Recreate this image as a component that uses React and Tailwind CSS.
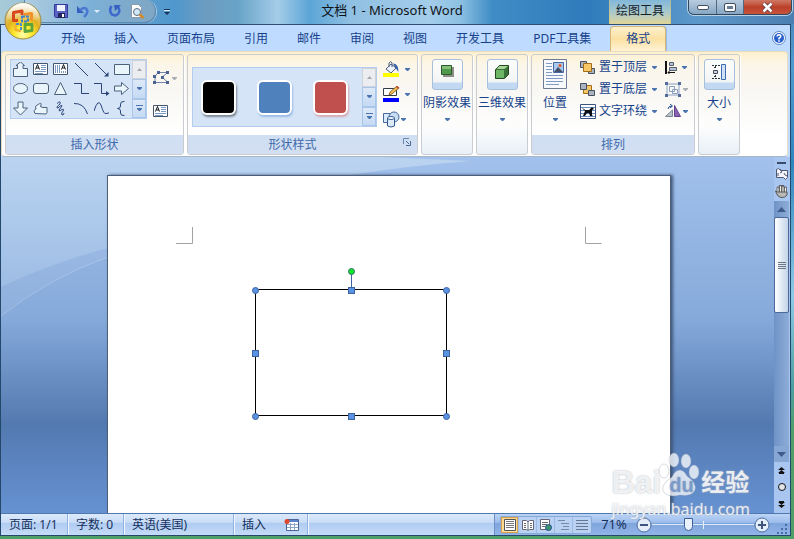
import React from 'react';

const tabs = ['开始', '插入', '页面布局', '引用', '邮件', '审阅', '视图', '开发工具', 'PDF工具集'];

function Svg({ w, h, children, className = '' }) {
  return (
    <svg width={w} height={h} viewBox={`0 0 ${w} ${h}`} className={`block shrink-0 ${className}`} fill="none" aria-hidden="true">
      {children}
    </svg>
  );
}

function Caret({ dim = false }) {
  return (
    <Svg w={5} h={3}>
      <path d="M0 0h5v1L3 3H2L0 1z" fill={dim ? '#a9adb3' : '#4a75b0'} />
    </Svg>
  );
}

function OfficeOrb() {
  return (
    <button aria-label="Office" className="absolute top-0.5 left-1 z-20 size-[38px]">
      <Svg w={38} h={38}>
        <defs>
          <radialGradient id="orb" cx="50%" cy="88%" r="88%">
            <stop offset="0" stopColor="#fffcae" />
            <stop offset="0.28" stopColor="#fdea2c" />
            <stop offset="0.55" stopColor="#e2b120" />
            <stop offset="0.8" stopColor="#e6c777" />
            <stop offset="1" stopColor="#fffbe8" />
          </radialGradient>
          <linearGradient id="gloss" x1="0" y1="0" x2="0" y2="1">
            <stop offset="0" stopColor="#fff" stopOpacity="0.9" />
            <stop offset="1" stopColor="#fff" stopOpacity="0.1" />
          </linearGradient>
        </defs>
        <circle cx="19" cy="19" r="18" fill="url(#orb)" stroke="#9b8a48" />
        <path d="M3 17A16 16 0 0 1 35 17Q19 21 3 17z" fill="url(#gloss)" />
        <g strokeLinejoin="round">
          <path d="M14 18.500H9.500V10.500L18 9V13" stroke="#d8481c" strokeWidth="3" />
          <path d="M20 12.500l7.500-1v7" stroke="#f0922a" strokeWidth="3" />
          <path d="M18 14.500h6v5h-6z" stroke="#3c7fce" strokeWidth="2" strokeDasharray="3 1" />
          <path d="M16 22h-4.500v6l5.500 1" stroke="#f3b431" strokeWidth="2.500" />
          <path d="M12 22h5v6" stroke="#4b8bd2" strokeWidth="2" strokeDasharray="3 1" />
          <path d="M21 22.500h7v6l-7 1z" stroke="#5ca43c" strokeWidth="2.800" />
        </g>
      </Svg>
    </button>
  );
}

function QuickAccess() {
  return (
    <div className="flex w-[175px] shrink-0 items-start">
      <div className="ml-6 flex h-[23px] w-[132px] items-center rounded-r-full border border-t-0 border-[#5f86ae] bg-linear-to-r from-[#b3cfe4]/80 via-[#7db0d8]/70 to-[#8fabc0]/70 pl-[29px] shadow-[1px_0_0_#a9cbe6]">
        <button aria-label="保存">
          <Svg w={14} h={14}>
            <path d="M0.500 0.500h13v13h-12l-1-1z" fill="#5a62c4" stroke="#34389a" />
            <path d="M3 1h8v6H3z" fill="#eef2fc" />
            <path d="M4 9h7v5H4z" fill="#23265c" />
            <path d="M8 10h2v3H8z" fill="#fff" />
          </Svg>
        </button>
        <button aria-label="撤消" className="ml-2 flex items-center gap-1">
          <Svg w={14} h={13}>
            <path d="M1 1v7h7z" fill="#3560be" />
            <path d="M4 5.500Q7 2 10 3.500Q13.500 7 8 12" stroke="#4a78d2" strokeWidth="2.500" />
          </Svg>
          <Svg w={6} h={3}><path d="M0 0h6L3 3z" fill="#dcecfa" /></Svg>
        </button>
        <button aria-label="恢复" className="ml-2">
          <Svg w={14} h={14}>
            <path d="M3.500 2Q0.500 7 4 10.500Q8.500 13 11 8.500Q12 5.500 10 3" stroke="#3c68cc" strokeWidth="2.500" />
            <path d="M6 1h7L7 7z" fill="#3560be" />
          </Svg>
        </button>
        <button aria-label="打印预览" className="ml-2">
          <Svg w={15} h={15}>
            <path d="M1.500 0.500h7l3 3v10h-10z" fill="#fff" stroke="#8a98ac" />
            <circle cx="7" cy="8" r="3.500" fill="#cfe9f7" stroke="#5c6b80" />
            <path d="M9.500 10.500l4 3.500" stroke="#d88a24" strokeWidth="2.500" />
          </Svg>
        </button>
      </div>
      <button aria-label="自定义快速访问工具栏" className="mt-[9px] ml-2">
        <Svg w={6} h={6}>
          <path d="M0 0h6v1H0z" fill="#17345c" /><path d="M0 3h6L3 6z" fill="#17345c" /><path d="M0 1h6v1H0z" fill="#d8ebfa" />
        </Svg>
      </button>
    </div>
  );
}

function TitleBar() {
  return (
    <header className="relative flex h-6 shrink-0 bg-[linear-gradient(90deg,#a8cbd8_0,#5f9fce_18%,#4f97cd_22%,#6d9cc0_26%,#68a4c8_30%,#a4cce8_35%,#5ca5d6_39%,#8fbfe2_44%,#a4cdea_54%,#8cc0e2_58%,#3f8cc6_62%,#2f7bbb_74%,#5d98ca_88%,#4b7fb2_100%)]">
      <QuickAccess />
      <h1 className="flex-1 text-center text-[13px] leading-[21px] text-[#101418]">文档 1 - Microsoft Word</h1>
      <div className="w-[62px] border-x border-[#d8bd62]/50 bg-linear-to-b from-[#82b7da] via-[#a9c9cb] to-[#e0d598] text-center text-[12px] leading-[22px] text-[#15202c]">绘图工具</div>
      <div className="flex w-[123px] justify-end pr-0.5">
        <div className="flex h-[15px] w-[104px] overflow-hidden rounded-b-md border border-t-0 border-[#33475c] shadow-[0_0_0_1px_#b8d2e8]">
          <button aria-label="最小化" className="flex w-7 items-center justify-center border-r border-[#4f6780] bg-linear-to-b from-[#b9ccdf] to-[#86a6c4]">
            <span className="h-[5px] w-3 rounded-xs border border-[#444f62] bg-white" />
          </button>
          <button aria-label="最大化" className="flex w-[27px] items-center justify-center border-r border-[#4f6780] bg-linear-to-b from-[#b9ccdf] to-[#86a6c4]">
            <span className="h-[9px] w-3 rounded-xs border border-[#444f62] bg-[#687d98] shadow-[inset_0_0_0_2px_#fff]" />
          </button>
          <button aria-label="关闭" className="flex flex-1 items-center justify-center bg-linear-to-b from-[#cf7866] via-[#bb4028] to-[#c8533a]">
            <Svg w={13} h={11}>
              <path d="M2.500 1.500l8 8M10.500 1.500l-8 8" stroke="#5a3a44" strokeWidth="4" />
              <path d="M2.500 1.500l8 8M10.500 1.500l-8 8" stroke="#fff" strokeWidth="2.500" />
            </Svg>
          </button>
        </div>
      </div>
    </header>
  );
}

function Tabs() {
  return (
    <nav className="flex h-[27px] shrink-0 border-t border-[#2f4e70] bg-[#bfdbff] pl-[46px] text-[12px] text-[#15428b]">
      {tabs.map((t) => (
        <button key={t} className="mr-px px-[14px] pt-px">{t}</button>
      ))}
      <button className="mt-px ml-1 w-14 rounded-t border border-b-0 border-[#d2b672] bg-linear-to-b from-[#fdf0cd] via-[#fbe0a2] to-[#fff2d4] shadow-[1px_0_0_#9dbbe2]">格式</button>
      <button aria-label="帮助" className="mr-1 ml-auto">
        <Svg w={14} h={14}>
          <circle cx="7" cy="7" r="6.500" fill="#fff" stroke="#5c85c4" />
          <circle cx="7" cy="7" r="5" fill="#2860cc" />
          <path d="M5 5.500Q5.200 3.800 7 3.800Q9 4 8.700 5.600Q8.500 6.500 7 7.200V8.500" stroke="#fff" strokeWidth="1.500" />
          <path d="M6.200 9.300h1.600v1.500H6.200z" fill="#fff" />
        </Svg>
      </button>
    </nav>
  );
}

function Group({ label, className = '', children, launcher = false }) {
  return (
    <section className={`flex shrink-0 flex-col overflow-hidden rounded-[3px] border border-[#c9cdd2] shadow-[1px_1px_0_#fff] ${label ? '' : 'bg-linear-to-b from-transparent from-70% to-[#e8f0f6]'} ${className}`}>
      <div className="flex flex-1 px-1 pt-1">{children}</div>
      {label && (
        <div className="flex h-[19px] items-start bg-linear-to-b from-[#d0dff3] to-[#d3def1] text-center text-[12px] leading-[19px] text-[#3e6aaa]">
          <span className="flex-1">{label}</span>
          {launcher && (
            <button aria-label="对话框" className="mt-[3px] flex w-5 pl-1.5">
              <Svg w={8} h={8}><path d="M0.500 6V0.500H6" stroke="#6a87b0" /><path d="M3 3l3 3M7.500 3v4.500H3" stroke="#4a6a98" /></Svg>
            </button>
          )}
        </div>
      )}
    </section>
  );
}

function GalleryScroll() {
  return (
    <div className="flex w-[14px] flex-col">
      <button aria-label="上一行" className="flex flex-1 items-center justify-center border border-[#cfd3d8] bg-[#ebedf0]"><Svg w={5} h={3}><path d="M0 3h5L2.500 0z" fill="#a8a8a8" /></Svg></button>
      <button aria-label="下一行" className="flex flex-1 items-center justify-center border border-[#a9c5ea] bg-linear-to-b from-[#dde9f8] to-[#c6daf4]"><Caret /></button>
      <button aria-label="其他" className="flex flex-1 flex-col items-center justify-center gap-0.5 border border-[#a9c5ea] bg-linear-to-b from-[#dde9f8] to-[#c6daf4]"><span className="h-px w-[7px] bg-[#4a75b0]" /><Caret /></button>
    </div>
  );
}

const ln = { stroke: '#2b4478', strokeWidth: 1 };
const sh = { stroke: '#4c6079', strokeWidth: 1, fill: '#eaf4fb' };

const textBoxIcon = (
  <>
    <path d="M0.500 1.500h14v11H0.500z" fill="#fff" stroke="#44566e" />
    <path d="M2.500 7.500l2-5 2 5M3.500 6h2.500" stroke="#10151c" />
    <path d="M8 3.500h5M8 5.500h5M8 7.500h5M2 9.500h11M2 11.500h8" stroke="#7b9ac6" />
  </>
);

const shapes = [
  ['上箭头标注', <path d="M0.500 6.500h4V3.500H3L7.500 0l4 3.500H10v3h4.500v8H0.500z" {...sh} />],
  ['文本框', textBoxIcon],
  ['竖排文本框', <><path d="M0.500 1.500h14v11H0.500z" fill="#fff" stroke="#44566e" /><path d="M2.500 3v8M4.500 3v8M6.500 3v8M8.500 9v2M10.500 9v2M12.500 9v2" stroke="#7b9ac6" /><path d="M8.500 7.500l2-5 2 5M9.500 6h2.500" stroke="#10151c" /></>],
  ['直线', <path d="M1 1l13 13" {...ln} />],
  ['箭头', <><path d="M1 1l12 12" {...ln} /><path d="M14.500 14.500H10l4.500-4.500z" fill="#2b4478" /></>],
  ['矩形', <path d="M0.500 2.500h15v10h-15z" {...sh} />],
  ['椭圆', <ellipse cx="7.500" cy="7.500" rx="7" ry="5" {...sh} />],
  ['圆角矩形', <rect x="0.500" y="2.500" width="15" height="10" rx="2.500" {...sh} />],
  ['三角形', <path d="M7.500 1.500l6 12h-12z" {...sh} />],
  ['肘形', <path d="M0 2.500h7.500v10H15" {...ln} />],
  ['肘形箭头', <><path d="M0 2.500h7.500v10H13" {...ln} /><path d="M15.500 12.500L12 10v5z" fill="#2b4478" /></>],
  ['右箭头', <path d="M0.500 5h7V1.500l7 6-7 6V10h-7z" {...sh} />],
  ['下箭头', <path d="M5 1h5v6h4.500l-7 7-7-7H5z" {...sh} />],
  ['任意多边形', <path d="M2 12.500Q0 9 3 8Q1 5 5 3.500Q9 1 8 4Q6 6 10 6.500H14v5l-1 1.500z" {...sh} />],
  ['自由曲线', <path d="M4 2.500Q8-1 7 3Q2 7 5 7Q9 3 9 5L6 9Q6 11 8 9Q12 7 10 10Q8 12 9 14Q11 14 11 12" {...ln} />],
  ['弧形', <path d="M0 2.500Q10 2 13.500 13" {...ln} />],
  ['曲线', <path d="M0 10Q4-3 7 4Q10 14 12 12.500L15 12" {...ln} />],
  ['左大括号', <path d="M10.500 0.500Q6.500 0 6.500 3V5Q6.500 7.500 3.500 7.500Q6.500 7.500 6.500 10V12Q6.500 15 10.500 14.500" {...ln} />],
];

function InsertShapes() {
  return (
    <Group label="插入形状" className="w-[179px]">
      <div className="flex h-[60px] w-[137px] shrink-0 border border-[#b2cdee] bg-[#d5e5f7]">
        <div className="grid flex-1 grid-cols-6 grid-rows-3">
          {shapes.map(([name, art]) => (
            <button key={name} aria-label={name} className="flex items-center justify-center"><Svg w={16} h={15}>{art}</Svg></button>
          ))}
        </div>
        <GalleryScroll />
      </div>
      <div className="flex flex-col gap-[19px] pt-3 pl-1.5">
        <button aria-label="编辑形状" className="flex items-center gap-0.5">
          <Svg w={17} h={14}>
            <path d="M2 11.500V5.500L5 1.500h10L9 6l6 5.500z" stroke="#7186ac" />
            <path d="M0 4h3v3H0zM4 0h3v3H4zM13 0h3v3h-3zM8 5h3v3H8zM0 10h3v3H0zM13 10h3v3h-3z" fill="#4a6392" />
          </Svg>
          <Caret dim />
        </button>
        <button aria-label="编辑文字"><Svg w={15} h={14}>{textBoxIcon}</Svg></button>
      </div>
    </Group>
  );
}

function ShapeStyles() {
  const swatches = [['黑色', 'bg-black shadow-[1px_2px_2px_#7d8795]'], ['蓝色', 'bg-[#4f81bd] shadow-[1px_2px_2px_#9bbbe6]'], ['红色', 'bg-[#c0504d] shadow-[1px_2px_2px_#d8a9b4]']];
  return (
    <Group label="形状样式" launcher className="w-[231px]">
      <div className="mt-2 flex h-[60px] w-[185px] shrink-0 border border-[#b2cdee] bg-[#d5e5f7]">
        <div className="flex flex-1 items-center gap-[21px] pl-2">
          {swatches.map(([name, c]) => (
            <button key={name} aria-label={name} className={`size-[35px] rounded-md border-2 border-white ${c}`} />
          ))}
        </div>
        <GalleryScroll />
      </div>
      <div className="flex flex-col gap-[9px] pt-0.5 pl-1.5">
        <button aria-label="形状填充" className="flex items-center gap-[5px]">
          <Svg w={17} h={16}>
            <path d="M3 8l5-5 5 4-5 5z" fill="#edf4fb" stroke="#4c5f7c" /><path d="M6 6V2q2-3 3 0v4" stroke="#4c5f7c" /><path d="M10 2.500q5.500 0 5.500 8.500l-3-4z" fill="#3460a8" />
            <path d="M0 12h16v4H0z" fill="#ff0" />
          </Svg>
          <Caret />
        </button>
        <button aria-label="形状轮廓" className="flex items-center gap-[5px]">
          <Svg w={17} h={16}>
            <path d="M0.500 2.500h13v7H0.500z" fill="#fff" stroke="#333b48" /><path d="M6 9l1-3 7-6 2 2-7 6z" fill="#f0bd56" stroke="#7c5020" strokeWidth="0.800" /><path d="M13 1l1.500-1L16.500 2 15 3z" fill="#c24b35" />
            <path d="M0 12h16v4H0z" fill="#00f" />
          </Svg>
          <Caret />
        </button>
        <button aria-label="更改形状" className="flex items-center gap-px">
          <Svg w={17} h={17}>
            <path d="M0.500 2.500h8v9h-8z" fill="#dbeafa" stroke="#47699c" /><circle cx="11" cy="6" r="5" fill="#c9def5" stroke="#47699c" />
            <path d="M4.500 7v8q3.500 2 7 0V7" fill="#dceafa" stroke="#355b92" /><ellipse cx="8" cy="7" rx="3.500" ry="1.500" fill="#fff" stroke="#355b92" />
          </Svg>
          <Caret />
        </button>
      </div>
    </Group>
  );
}

function BigButton({ label, children, framed = true }) {
  return (
    <button className="flex flex-1 flex-col items-center text-[12px] leading-[18px] whitespace-nowrap text-[#15428b]">
      <span className={framed ? 'flex h-[31px] w-[31px] items-start justify-center rounded-[3px] border border-[#a6bfdd] bg-[linear-gradient(#fdfdfb_0,#f3f5f5_22px,#c3d9f1_23px)] pt-1' : 'flex h-[31px] items-start'}>
        {children}
      </span>
      <span className="mt-1">{label}</span>
      <span className="mt-1.5"><Caret /></span>
    </button>
  );
}

function ArrangeRow({ label, icon }) {
  return (
    <button className="flex h-[22px] items-center gap-[3px] text-[12px] whitespace-nowrap text-[#15428b]">
      {icon}<span>{label}</span><span className="pl-0.5"><Caret /></span>
    </button>
  );
}

function Arrange() {
  const gray = { fill: '#aab3c0', stroke: '#475160' };
  const gold = { fill: '#f6c867', stroke: '#a36d18' };
  return (
    <Group label="排列" className="w-[164px]">
      <div className="flex w-[38px] shrink-0">
        <BigButton label="位置" framed={false}>
          <Svg w={24} h={30}>
            <path d="M0.500 0.500h23v29H0.500z" fill="#f7f9fd" stroke="#6c7c98" />
            <path d="M3 4.500h6M3 7.500h6M3 10.500h6M3 13.500h6M3 16.500h17M3 19.500h17M3 22.500h17M3 25.500h13" stroke="#7e9ac4" />
            <path d="M10.500 3.500h10v10h-10z" fill="#a9caf0" stroke="#4968a0" /><circle cx="17" cy="6.500" r="1.500" fill="#e65a25" /><path d="M11 13l4-5 5 5z" fill="#44506c" />
          </Svg>
        </BigButton>
      </div>
      <div className="-mt-[3px] ml-1.5 flex flex-col">
        <ArrangeRow label="置于顶层" icon={<Svg w={16} h={15}><path d="M0.500 1.500h6v6h-6zM8.500 8.500h6v5h-6z" {...gray} /><path d="M3.500 3.500h8v8h-8z" {...gold} /></Svg>} />
        <ArrangeRow label="置于底层" icon={<Svg w={16} h={15}><path d="M3.500 3.500h8v8h-8z" {...gold} /><path d="M0.500 1.500h6v6h-6zM8.500 8.500h6v5h-6z" {...gray} /></Svg>} />
        <ArrangeRow label="文字环绕" icon={<Svg w={16} h={15}><path d="M0.500 0.500h15v14H0.500z" fill="#fff" stroke="#3c5280" /><path d="M1 3.500h14M1 6.500h14M1 9.500h14M1 12.500h14" stroke="#6a8cc0" /><path d="M2 4l2 1 1 1h4l3-3 2 2-2 1v5l1 1h-3l-1-3H7l-2 3H3l2-5z" fill="#0c0e12" /></Svg>} />
      </div>
      <div className="-mt-[3px] ml-2 flex flex-col">
        <button aria-label="对齐" className="flex h-[22px] items-center gap-1"><Svg w={13} h={13}><path d="M1 0v13" stroke="#111" strokeWidth="2" /><path d="M4.500 1.500h4v3h-4zM4.500 6.500h7v3h-7z" fill="#b4c2d4" stroke="#54606f" /><path d="M3 11.500h7M5 9.500l-2 2 2 2" stroke="#111" /></Svg><Caret /></button>
        <button aria-label="组合" className="flex h-[22px] items-center gap-0.5"><Svg w={16} h={15}><path d="M2 2h12v11H2zM4.500 4.500h5v5h-5zM7.500 7.500h5v4h-5z" stroke="#8ba0c0" /><path d="M0 0h3v3H0zM13 0h3v3h-3zM0 12h3v3H0zM13 12h3v3h-3z" fill="#536b9a" /></Svg><Caret dim /></button>
        <button aria-label="旋转" className="flex h-[22px] items-center gap-0.5"><Svg w={16} h={14}><path d="M0.500 12.500h7V6z" fill="#b9c3cb" stroke="#7b8792" /><path d="M9.500 1.500v11h6z" fill="#8a63b2" stroke="#62418c" /><path d="M3 5q0-3 4-3M5 0l2.500 2L5 4" stroke="#294f94" /></Svg><Caret /></button>
      </div>
    </Group>
  );
}

function Ribbon() {
  return (
    <div className="mr-0.5 flex h-[106px] shrink-0 gap-[3px] rounded-[4px] border border-[#e8dcc0] border-b-[#a9b6c6] bg-[linear-gradient(#fff0cc_0,#fcf6e9_12%,#f8f7f3_35%,#ffffff_80%)] px-[3px] pt-0.5 pb-px">
      <InsertShapes />
      <ShapeStyles />
      <Group className="w-[52px]">
        <div className="-mx-1 flex flex-1">
          <BigButton label="阴影效果"><Svg w={15} h={15}><path d="M3 3h11v10H3z" fill="#8d8f86" /><path d="M1.500 1.500h10v9h-10z" fill="#4f9a4a" stroke="#2c5a2c" /><path d="M2 2h9v3H2z" fill="#84c07a" /></Svg></BigButton>
        </div>
      </Group>
      <Group className="w-[52px]">
        <div className="-mx-1 flex flex-1">
          <BigButton label="三维效果"><Svg w={16} h={16}><path d="M1.500 5.500l4-4h9v9l-4 4h-9z" fill="#397238" stroke="#23491f" /><path d="M2 6h8v8H2z" fill="#6cb665" /><path d="M2.500 5l3-3h8.500l-3.500 3z" fill="#a9d59d" /></Svg></BigButton>
        </div>
      </Group>
      <Arrange />
      <Group className="w-[42px]">
        <BigButton label="大小"><Svg w={15} h={17}><path d="M0 1.500h8M0 14.500h8M3.500 2v3M3.500 11v3M2 3.500h3M2 12.500h3" stroke="#2d333e" strokeDasharray="2 1" /><path d="M1.500 6.500h4v3h-4z" fill="#c9d2dd" stroke="#48505e" /><path d="M9.500 0.500h4v15h-4z" fill="#cfe1f7" stroke="#3f6cb0" /></Svg></BigButton>
      </Group>
    </div>
  );
}

function Page() {
  const round = [[147.5, 114.5], [338.5, 114.5], [147.5, 240.5], [338.5, 240.5]];
  const square = [[243.5, 114.5], [147.5, 177.5], [338.5, 177.5], [243.5, 240.5]];
  return (
    <main className="relative mx-auto mt-[18px] w-[564px] overflow-hidden border border-b-0 border-[#4d5f78] bg-white shadow-[2px_0_3px_#3f567a]">
      <Svg w={562} h={337}>
        <path d="M68 67.500h16.500V51M493.500 67.500H477.500V51" stroke="#a3a3a3" />
        <path d="M147.500 113.500h191v126h-191z" stroke="#000" />
        <path d="M243.500 97v17" stroke="#3c62a0" />
        <circle cx="243.500" cy="95.500" r="3" fill="#12e62a" stroke="#2d6a70" />
        {round.map(([x, y]) => <circle key={`${x}-${y}`} cx={x} cy={y} r="3" fill="#5b92e2" stroke="#3c62a0" />)}
        {square.map(([x, y]) => <rect key={`${x}-${y}`} x={x - 3} y={y - 3} width="6" height="6" fill="#5b92e2" stroke="#3c62a0" />)}
      </Svg>
    </main>
  );
}

function ScrollColumn() {
  return (
    <aside className="flex w-4 shrink-0 flex-col items-center bg-[#a9c6f0] pr-px">
      <div className="mt-[5px] h-0.5 w-[9px] shrink-0 bg-[#3c4a6c]" />
      <button aria-label="标尺" className="mt-1">
        <Svg w={12} h={12}><path d="M0.500 1.500l2-1 2 2h7v7l-2 2-2-2h-7z" fill="#f4f6fa" stroke="#4e5874" /><path d="M4 1l2 3-2 1M8 5l1 2 2 1M2 5v3" stroke="#4e5874" /></Svg>
      </button>
      <button aria-label="抓手" className="mt-[5px]">
        <Svg w={13} h={13}><path d="M3 8V3M5.500 7V1M8 7V1.500M10.500 8V3" stroke="#565656" strokeWidth="2.800" strokeLinecap="round" /><path d="M3 8V3M5.500 7V1.500M8 7V2M10.500 8V3" stroke="#f0f0ee" strokeWidth="1.200" strokeLinecap="round" /><path d="M0.500 6l2 1h9.500v3q-2 3-6 2.500-3 0-5.500-6z" fill="#b9b9b7" stroke="#565656" /></Svg>
      </button>
      <div className="mt-[3px] flex w-full flex-1 flex-col items-stretch bg-linear-to-r from-[#6f93c6] to-[#8eadd8]">
        <button aria-label="向上滚动" className="flex h-4 items-center justify-center"><Svg w={9} h={5}><path d="M0 5h9L4.500 0z" fill="#3f5a8c" /></Svg></button>
        <button aria-label="垂直滚动条" className="flex h-24 flex-col items-center justify-center gap-px rounded-xs border border-[#4c6898] bg-linear-to-r from-white to-[#c3d4e8]">
          <span className="h-px w-2 bg-[#6b7686]" /><span className="h-px w-2 bg-[#6b7686]" /><span className="h-px w-2 bg-[#6b7686]" /><span className="h-px w-2 bg-[#6b7686]" />
        </button>
        <button aria-label="向下滚动" className="mt-auto flex h-4 items-center justify-center bg-[#86a6d4]"><Svg w={9} h={5}><path d="M0 0h9L4.500 5z" fill="#3f5a8c" /></Svg></button>
      </div>
      <div className="flex h-[51px] shrink-0 flex-col items-center justify-around">
        <button aria-label="前一页"><Svg w={7} h={7}><path d="M0 3L3.500 0 7 3zM0 6l3.500-3L7 6zM1 6h5v1H1z" fill="#111" /></Svg></button>
        <button aria-label="选择浏览对象"><Svg w={8} h={8}><circle cx="4" cy="4" r="3.500" fill="#e3e5e8" stroke="#111" /></Svg></button>
        <button aria-label="下一页"><Svg w={7} h={7}><path d="M0 1h7L3.500 4zM0 4h7L3.500 7zM1 0h5v1H1z" fill="#111" /></Svg></button>
      </div>
    </aside>
  );
}

function Watermark() {
  return (
    <div className="pointer-events-none absolute right-10 bottom-[-7px] z-10 text-white/80 [text-shadow:0_0_2px_#a4acb8]">
      <div className="flex h-[46px] items-end">
        <span className="font-['Liberation_Sans',sans-serif] text-[32px] leading-[32px] font-bold">Bai</span>
        <div className="relative -ml-1">
          <Svg w={44} h={46}>
            <g fill="#fff" fillOpacity="0.750" stroke="#8d98a8" strokeOpacity="0.350">
              <ellipse cx="7" cy="19" rx="5" ry="7" /><ellipse cx="17" cy="8" rx="5" ry="7" /><ellipse cx="29" cy="9" rx="5" ry="7" /><ellipse cx="37" cy="20" rx="5" ry="7" />
              <path d="M23 18Q27 18 30 24Q40 31 38 38Q35 45 23 43Q10 46 6 39Q4 32 15 25Q18 18 23 18z" />
            </g>
          </Svg>
          <span className="absolute bottom-0.5 left-3 font-['Liberation_Sans',sans-serif] text-[20px] leading-[22px] font-bold text-[#7a9aca]">du</span>
        </div>
        <span className="text-[24px] leading-[32px] font-bold">经验</span>
      </div>
      <div className="font-['Noto_Sans',sans-serif] text-[16px] leading-[22px]">jingyan.baidu.com</div>
    </div>
  );
}

function Workspace() {
  return (
    <div className="relative flex min-h-0 flex-1">
      <div className="relative flex min-w-0 flex-1 bg-[linear-gradient(#a2c1ec_0,#86aada_45%,#5379b0_75%,#6692d2_100%)] pl-[3px]">
        <svg className="absolute top-0 left-0 h-[180px] w-[480px]" viewBox="0 0 480 180" aria-hidden="true">
          <defs>
            <linearGradient id="sweep" x1="0" y1="0" x2="0" y2="1">
              <stop offset="0" stopColor="#d2e6f4" stopOpacity="0.500" />
              <stop offset="1" stopColor="#c5dcf2" stopOpacity="0.320" />
            </linearGradient>
          </defs>
          <path d="M0 0H380L470 4Q240 22 107 91Q50 106 0 130z" fill="url(#sweep)" />
          <path d="M0 159Q50 120 107 100V91Q50 106 0 130z" fill="#fff" fillOpacity="0.070" />
          <path d="M0 159Q50 120 107 100" fill="none" stroke="#fff" strokeOpacity="0.200" />
        </svg>
        <Page />
      </div>
      <ScrollColumn />
      <Watermark />
    </div>
  );
}

function ViewButton({ label, active = false, children }) {
  return (
    <button aria-label={label} className={`flex w-[18px] items-center justify-center border-r border-[#9dbbe4] last:border-r-0 ${active ? 'bg-linear-to-b from-[#fbd38c] to-[#ffe29a] shadow-[inset_0_0_0_1px_#d8a252]' : ''}`}>
      <Svg w={12} h={12}>{children}</Svg>
    </button>
  );
}

function ZoomButton({ label, plus = false }) {
  return (
    <button aria-label={label}>
      <Svg w={16} h={16}><circle cx="8" cy="8" r="7" fill="#e4eefa" stroke="#4d6c9c" /><path d={plus ? 'M4 8h8M8 4v8' : 'M4 8h8'} stroke="#3e547c" strokeWidth="2" /></Svg>
    </button>
  );
}

function StatusBar() {
  const cell = 'flex items-center border-r border-[#8fb2e0] px-2 shadow-[1px_0_0_#eff6ff]';
  return (
    <footer className="relative flex h-[22px] shrink-0 border-t border-[#4d78b0] bg-[linear-gradient(#dce9fb_0,#c9dcf7_40%,#b0ccf2_45%,#c5dbf7_100%)] text-[12px] whitespace-nowrap text-[#15305c]">
      <div className={`${cell} w-[67px]`}>页面: 1/1</div>
      <div className={`${cell} w-14`}>字数: 0</div>
      <div className={`${cell} w-[110px]`}>英语(美国)</div>
      <div className={`${cell} w-[74px] justify-between`}>
        插入
        <Svg w={15} h={13}><path d="M2.500 1.500h12v11h-12z" fill="#fff" stroke="#4a6496" /><path d="M3 3h11" stroke="#5a83cc" strokeWidth="2" /><path d="M3 6.500h11M3 9.500h11M6.500 5v7M10.500 5v7" stroke="#8ea4c8" /><circle cx="3" cy="3.500" r="2.500" fill="#e0482c" /></Svg>
      </div>
      <div className="ml-auto flex items-center border-l border-[#6c8fc4] bg-[linear-gradient(#bcd4f6_0,#9dbdec_40%,#7fa5dd_45%,#92b5e8_100%)] pr-0.5 pl-[5px]">
        <div className="flex h-[18px] rounded-xs border border-[#87a9d8] bg-[#b9d1f3]">
          <ViewButton label="页面视图" active><path d="M0.500 0.500h11v11H0.500z" fill="#fff" stroke="#555" /><path d="M2 2.500h8M2 4.500h8M2 6.500h8M2 8.500h8" stroke="#777" /></ViewButton>
          <ViewButton label="阅读版式"><path d="M0.500 1.500h4l1.500 1.500 1.500-1.500h4v9h-4l-1.500 1-1.500-1h-4zM6 3v8" fill="#fff" stroke="#667" /><path d="M2 4.500h2M2 6.500h2M8 4.500h2M8 6.500h2M2 8.500h2M8 8.500h2" stroke="#667" /></ViewButton>
          <ViewButton label="Web 版式"><path d="M0.500 0.500h9v10h-9z" fill="#fff" stroke="#667" /><path d="M2 3.500h6M2 5.500h5M2 7.500h3" stroke="#667" /><circle cx="8.500" cy="8.500" r="3" fill="#3e9270" stroke="#27508c" /></ViewButton>
          <ViewButton label="大纲视图"><path d="M0 1.500h7M3 4.500h8M5 7.500h6M3 10.500h8" stroke="#778aa5" /></ViewButton>
          <ViewButton label="普通视图"><path d="M0 1.500h12M0 4.500h12M0 7.500h12M0 10.500h12" stroke="#667894" /></ViewButton>
        </div>
        <button className="w-[44px] text-[13px]">71%</button>
        <ZoomButton label="缩小" />
        <div className="relative flex w-[102px] items-center">
          <span className="absolute left-[51px] h-2 w-px bg-[#edf4ff]" />
          <input
            type="range"
            min="0"
            max="100"
            defaultValue="34"
            aria-label="显示比例"
            className="relative h-4 w-full appearance-none bg-[linear-gradient(#dfeafa,#dfeafa)] bg-[length:100%_1px] bg-center bg-no-repeat [&::-webkit-slider-thumb]:h-[13px] [&::-webkit-slider-thumb]:w-[9px] [&::-webkit-slider-thumb]:appearance-none [&::-webkit-slider-thumb]:rounded-b-full [&::-webkit-slider-thumb]:border [&::-webkit-slider-thumb]:border-[#3c5f98] [&::-webkit-slider-thumb]:bg-[#e8f1fc]"
          />
        </div>
        <ZoomButton label="放大" plus />
        <Svg w={12} h={12} className="ml-1.5 self-end"><path d="M9 1h2v2H9zM5 5h2v2H5zM9 5h2v2H9zM1 9h2v2H1zM5 9h2v2H5zM9 9h2v2H9z" fill="#4a6ca4" /></Svg>
      </div>
    </footer>
  );
}

export default function App() {
  return (
    <div className="relative flex h-screen min-h-[400px] flex-col overflow-hidden bg-[linear-gradient(#4b86b8_0,#4e9bd0_12%,#2f86bd_30%,#8ccbe8_55%,#4ba0a0_72%,#4f9f68_80%)] pb-1 font-['Noto_Sans','Noto_Sans_CJK_SC',sans-serif]">
      <OfficeOrb />
      <TitleBar />
      <div className="mr-1 ml-px flex min-h-0 flex-1 flex-col bg-[#bfdbff] shadow-[0_0_0_1px_#24486c]">
        <Tabs />
        <Ribbon />
        <Workspace />
        <StatusBar />
      </div>
    </div>
  );
}
